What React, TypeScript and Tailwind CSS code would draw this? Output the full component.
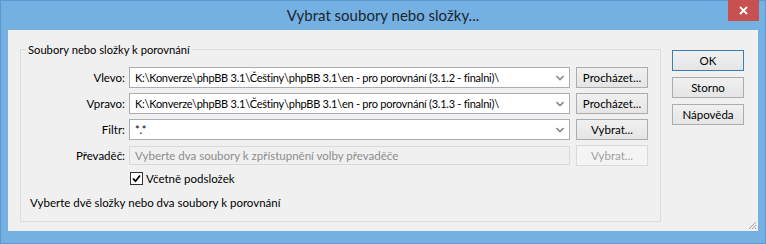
import React from 'react';

const font = "font-['Lato','Liberation_Sans',sans-serif]";

function Chevron() {
  return (
    <svg width="8" height="6" viewBox="0 0 8 6" className="shrink-0">
      <path d="M0.5 1 L4 4.5 L7.5 1" fill="none" stroke="#8a8a8a" strokeWidth="1.6" />
    </svg>
  );
}

function Combo({ value }: { value: string }) {
  return (
    <div className="flex h-[21px] w-[441px] items-center border border-[#abadb3] bg-white pl-[5px] pr-[5px]">
      <span className="flex-1 truncate whitespace-pre text-[11px] tracking-[-0.25px] text-black">{value}</span>
      <Chevron />
    </div>
  );
}

function Button({ label, disabled, primary }: { label: string; disabled?: boolean; primary?: boolean }) {
  return (
    <div
      className={
        'flex h-[21px] w-[72px] items-center justify-center border text-[11.5px] ' +
        (disabled
          ? 'border-[#d9d9d9] bg-[#f4f4f4] text-[#a0a0a0]'
          : primary
            ? 'border-[#3c7fb1] bg-gradient-to-b from-[#f0f0f0] to-[#e5e5e5] text-black'
            : 'border-[#acacac] bg-gradient-to-b from-[#f0f0f0] to-[#e5e5e5] text-black')
      }
    >
      {label}
    </div>
  );
}

function Row({ label, children, button, disabled }: { label: string; children: React.ReactNode; button: string; disabled?: boolean }) {
  return (
    <div className="flex items-center">
      <div className="w-[108px] pr-[4px] text-right text-[11.5px] text-black">{label}</div>
      {children}
      <div className="ml-[6px]">
        <Button label={button} disabled={disabled} />
      </div>
    </div>
  );
}

export default function App() {
  return (
    <div className={`relative h-[244px] w-[766px] border border-[#5a9ad0] bg-[#74b1e2] leading-[15px] ${font}`}>
      {/* title bar */}
      <div className="relative flex h-[29px] items-center justify-center">
        <span className="text-[15px] text-[#1b2530]">Vybrat soubory nebo složky...</span>
        <div className="absolute right-[6px] top-[-1px] flex h-[21px] w-[31px] items-center justify-center bg-[#c75050]">
          <svg width="9" height="9" viewBox="0 0 9 9">
            <path d="M1 1 L8 8 M8 1 L1 8" stroke="#ffffff" strokeWidth="1.8" />
          </svg>
        </div>
      </div>

      {/* client area */}
      <div className="relative mx-[7px] flex h-[201px] bg-[#f0f0f0] pl-[12px] pt-[19px]">
        {/* group box */}
        <div className="relative h-[173px] w-[641px] border border-[#dcdcdc]">
          <div className="absolute left-[5px] top-[-8px] bg-[#f0f0f0] px-[2px] text-[11.2px] text-black">
            Soubory nebo složky k porovnání
          </div>
          <div className="flex flex-col gap-[5px] pt-[17px]">
            <Row label="Vlevo:" button="Procházet...">
              <Combo value="K:\Konverze\phpBB 3.1\Češtiny\phpBB 3.1\en - pro porovnání (3.1.2 - finalni)\" />
            </Row>
            <Row label="Vpravo:" button="Procházet...">
              <Combo value="K:\Konverze\phpBB 3.1\Češtiny\phpBB 3.1\en - pro porovnání (3.1.3 - finalni)\" />
            </Row>
            <Row label="Filtr:" button="Vybrat...">
              <Combo value="*.*" />
            </Row>
            <Row label="Převaděč:" button="Vybrat..." disabled>
              <div className="flex h-[19px] w-[441px] items-center border border-[#d9d9d9] bg-[#f0f0f0] pl-[5px] text-[11.5px] text-[#8d8d8d]">
                Vyberte dva soubory k zpřístupnění volby převaděče
              </div>
            </Row>
          </div>
          <div className="ml-[109px] mt-[5px] flex items-center gap-[3px]">
            <div className="flex h-[13px] w-[13px] items-center justify-center border border-[#333333] bg-white">
              <svg width="9" height="9" viewBox="0 0 9 9">
                <path d="M1 4.5 L3.5 7.2 L8 1.5" fill="none" stroke="#000000" strokeWidth="1.8" />
              </svg>
            </div>
            <span className="text-[11.5px] text-black">Včetně podsložek</span>
          </div>
          <div className="ml-[9px] mt-[9px] text-[11.5px] text-black">
            Vyberte dvě složky nebo dva soubory k porovnání
          </div>
        </div>

        {/* right buttons */}
        <div className="ml-[11px] flex flex-col gap-[6px] pt-[1px]">
          <Button label="OK" primary />
          <Button label="Storno" />
          <Button label="Nápověda" />
        </div>

        {/* size grip */}
        <svg className="absolute bottom-[1px] right-[1px]" width="10" height="10" viewBox="0 0 10 10">
          <path d="M9 2 L2 9 M9 5 L5 9 M9 8 L8 9" stroke="#a0a0a0" strokeWidth="1" />
        </svg>
      </div>
    </div>
  );
}
